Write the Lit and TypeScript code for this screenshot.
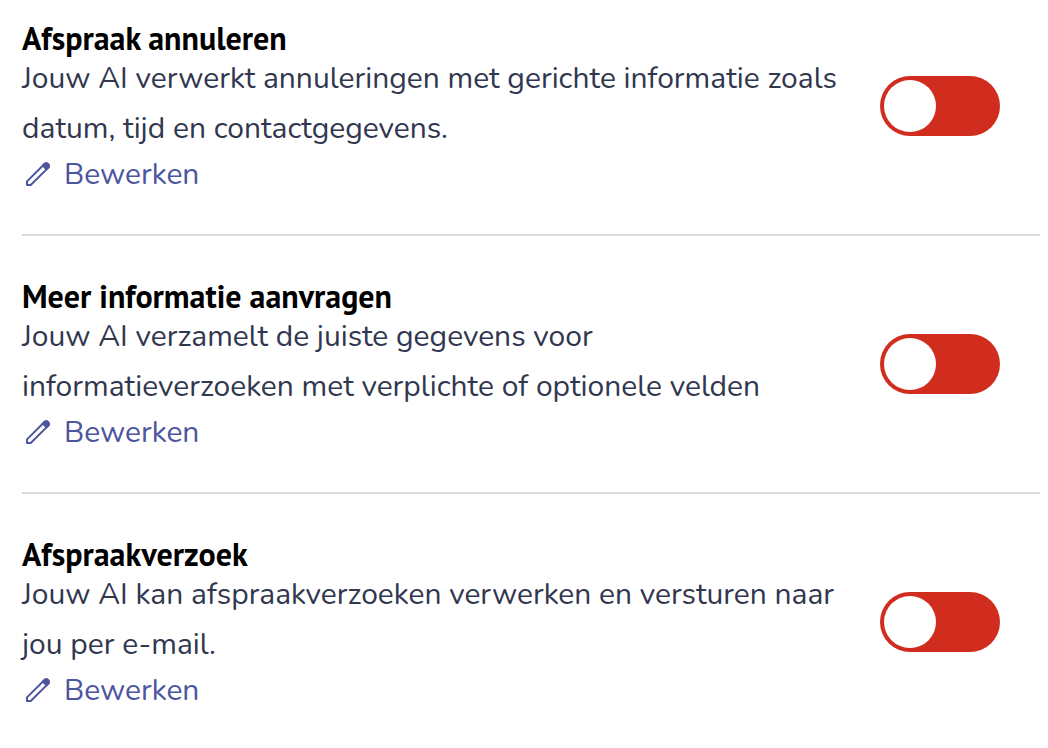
import { LitElement, html, css } from "lit";
import { customElement, property, state } from "lit/decorators.js";

interface Feature {
  id: string;
  title: string;
  description: string;
}

const FEATURES: Feature[] = [
  {
    id: "annuleren",
    title: "Afspraak annuleren",
    description:
      "Jouw AI verwerkt annuleringen met gerichte informatie zoals datum, tijd en contactgegevens.",
  },
  {
    id: "informatie",
    title: "Meer informatie aanvragen",
    description:
      "Jouw AI verzamelt de juiste gegevens voor informatieverzoeken met verplichte of optionele velden",
  },
  {
    id: "verzoek",
    title: "Afspraakverzoek",
    description:
      "Jouw AI kan afspraakverzoeken verwerken en versturen naar jou per e-mail.",
  },
];

@customElement("toggle-switch")
export class ToggleSwitch extends LitElement {
  @property() label = "";
  @state() private on = false;

  static styles = css`
    :host {
      display: block;
      flex: none;
    }
    .switch {
      appearance: none;
      display: flex;
      box-sizing: border-box;
      width: 120px;
      height: 60px;
      margin: 0;
      padding: 4px;
      border-radius: 30px;
      background: #d02d1e;
      cursor: pointer;
    }
    .switch::before {
      content: "";
      width: 52px;
      height: 52px;
      border-radius: 50%;
      background: #fff;
    }
    .switch:checked {
      justify-content: flex-end;
      background: #2e9e5b;
    }
  `;

  render() {
    return html`<input
      class="switch"
      type="checkbox"
      role="switch"
      aria-label=${this.label}
      .checked=${this.on}
      @change=${(e: Event) => (this.on = (e.target as HTMLInputElement).checked)}
    />`;
  }
}

@customElement("app-root")
export class AppRoot extends LitElement {
  static styles = css`
    :host {
      display: block;
      background: #fff;
      font-family: "Nunito", "Open Sans", sans-serif;
      font-size: 30px;
      color: #31374f;
    }
    .list {
      margin: 0;
      padding: 16px 8px 0 22px;
      list-style: none;
    }
    .row {
      display: flex;
      align-items: center;
      gap: 40px;
      padding: 0 40px 38px 0;
    }
    .row + .row {
      padding-top: 38px;
      border-top: 2px solid #d9d9d9;
    }
    .row:last-child {
      padding-bottom: 0;
    }
    .text {
      flex: 1;
      min-width: 0;
    }
    .title {
      margin: 0;
      padding: 8px 0 2px;
      font-family: "PT Sans", "Lato", sans-serif;
      font-size: 32px;
      font-weight: 700;
      line-height: 28px;
      color: #000;
    }
    .description {
      margin: 0;
      line-height: 50px;
    }
    .edit {
      display: flex;
      align-items: center;
      gap: 10px;
      width: fit-content;
      line-height: 42px;
      color: #4c559e;
      text-decoration: none;
    }
    .pencil {
      width: 32px;
      height: 32px;
      fill: none;
      stroke: currentColor;
      stroke-width: 2;
      stroke-linejoin: round;
    }
    .tip {
      fill: currentColor;
    }
  `;

  render() {
    return html`<ul class="list">
      ${FEATURES.map(
        (f) => html`<li class="row">
          <div class="text">
            <h3 class="title">${f.title}</h3>
            <p class="description">${f.description}</p>
            <a class="edit" href="#${f.id}" aria-label="${f.title} bewerken">
              <svg class="pencil" viewBox="0 0 32 32" aria-hidden="true">
                <path d="M5 22.4 22.2 5.2Q24.2 3.4 26 5.1 27.8 7 26 8.9L8.7 26H5Z" />
                <path class="tip" d="M20.8 6.6 22.2 5.2Q24.2 3.4 26 5.1 27.8 7 26 8.9L24.6 10.3Z" />
              </svg>
              Bewerken
            </a>
          </div>
          <toggle-switch label=${f.title}></toggle-switch>
        </li>`
      )}
    </ul>`;
  }
}
